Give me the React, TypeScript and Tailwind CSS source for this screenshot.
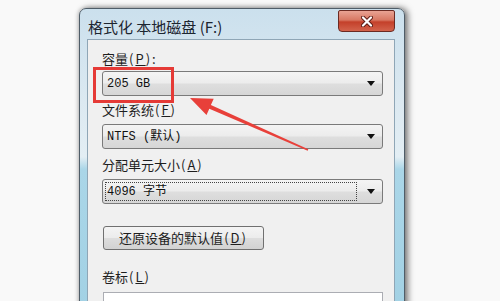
import React from 'react'

const cjk = "font-['Noto_Sans_CJK_SC','Microsoft_YaHei',sans-serif]"

function Label({ text, hotkey, colon }: { text: string; hotkey: string; colon?: boolean }) {
  return (
    <div className={`h-4 text-[13px] leading-4 text-[#1e1e1e] ${cjk}`}>
      {text}
      <span className="ml-[1px] tracking-[2px]">
        (<span className="underline underline-offset-1">{hotkey}</span>)
      </span>
      {colon && ':'}
    </div>
  )
}

function Combo({ children, focused }: { children: React.ReactNode; focused?: boolean }) {
  return (
    <div className="flex h-[25px] w-[281px] items-center rounded-[3px] border border-[#7a7a7a] bg-[linear-gradient(180deg,#f4f4f4_0%,#ececec_48%,#dedede_52%,#d6d6d6_100%)] pl-[2px] pr-[7px]">
      <div
        className={`flex h-[19px] flex-1 items-center pl-[1px] text-[12px] text-[#111] font-['Liberation_Mono','Noto_Sans_CJK_SC',monospace] ${
          focused ? 'mr-[10px] border border-dotted border-[#444]' : 'border border-transparent'
        }`}
      >
        {children}
      </div>
      <svg width="8" height="5" viewBox="0 0 8 5" className="shrink-0">
        <path d="M0 0 H8 L4 5 Z" fill="#111" />
      </svg>
    </div>
  )
}

export default function App() {
  return (
    <div className="relative h-[301px] w-[500px] overflow-hidden bg-[#f9f9f9]">
      <div className="ml-[79px] mt-[8px] flex h-[310px] w-[326px] flex-col rounded-t-[7px] border border-[#4f5d68] bg-[linear-gradient(180deg,#cbe0ed_0%,#dce9f1_30%,#e3eef4_48%,#aad6e8_52%,#a2d1e4_100%)] shadow-[3px_0_6px_rgba(0,0,0,0.5),-1px_0_4px_rgba(0,0,0,0.2)]">
        <div className="flex h-[33px] items-start justify-between pl-[8px] pr-[9px]">
          <span className={`mt-[8px] text-[15px] leading-5 text-[#1c2530] ${cjk}`}>格式化 本地磁盘 (F:)</span>
          <div className="mt-[1px] flex h-[22px] w-[57px] items-center justify-center rounded-b-[4px] rounded-t-[2px] border border-[#6b2a22] bg-[linear-gradient(180deg,#e9a394_0%,#d87863_45%,#c4402a_55%,#d2634c_100%)]">
            <svg width="12" height="11" viewBox="0 0 12 11">
              <path d="M2 1.5 L10 9.5 M10 1.5 L2 9.5" stroke="#5a1b14" strokeWidth="4" strokeLinecap="round" />
              <path d="M2 1.5 L10 9.5 M10 1.5 L2 9.5" stroke="#ffffff" strokeWidth="2.2" strokeLinecap="round" />
            </svg>
          </div>
        </div>
        <div className="ml-[7px] flex w-[308px] flex-1 flex-col border border-[#8fa6b6] bg-[#f0f0f0] pl-[14px] pt-[11px]">
          <Label text="容量" hotkey="P" colon />
          <div className="mt-[4px]">
            <Combo>205 GB</Combo>
          </div>
          <div className="mt-[6px]">
            <Label text="文件系统" hotkey="F" />
          </div>
          <div className="mt-[6px]">
            <Combo>NTFS (默认)</Combo>
          </div>
          <div className="mt-[8px]">
            <Label text="分配单元大小" hotkey="A" />
          </div>
          <div className="mt-[6px]">
            <Combo focused>4096 字节</Combo>
          </div>
          <button
            className={`ml-[1px] mt-[22px] flex h-[24px] w-[161px] items-center justify-center rounded-[3px] border border-[#707070] bg-[linear-gradient(180deg,#f4f4f4_0%,#ececec_48%,#dddddd_52%,#d2d2d2_100%)] text-[13px] text-[#1e1e1e] ${cjk}`}
          >
            还原设备的默认值
            <span className="ml-[1px] tracking-[2px]">
              (<span className="underline underline-offset-1">D</span>)
            </span>
          </button>
          <div className="mt-[19px]">
            <Label text="卷标" hotkey="L" />
          </div>
          <div className="ml-[1px] mt-[7px] h-[24px] w-[280px] border border-[#abadb3] bg-white" />
        </div>
      </div>

      <div className="absolute left-[93px] top-[67px] h-[36px] w-[81px] border-[3px] border-[#e53a36]" />

      <svg className="absolute left-0 top-0" width="500" height="301" viewBox="0 0 500 301">
        <polygon
          points="190,98 213.7,98.7 210.9,105.1 308.3,149.3 307.7,150.7 209.3,108.7 206.5,115.1"
          fill="#e8403a"
        />
      </svg>
    </div>
  )
}
